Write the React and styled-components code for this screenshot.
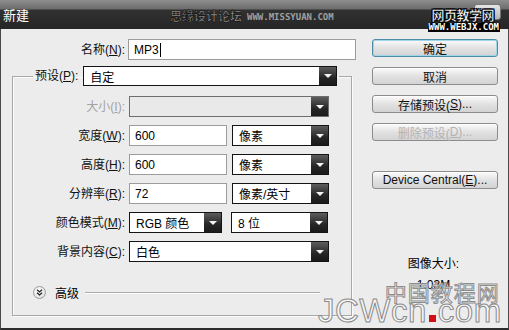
import React from "react";
import styled, { createGlobalStyle } from "styled-components";

const GlobalStyle = createGlobalStyle`
  html, body {
    margin: 0;
    padding: 0;
    background: #ececec;
  }
  body {
    font-family: "Liberation Sans", "Noto Sans CJK SC", sans-serif;
    font-size: 12px;
    color: #000;
  }
`;

const Dialog = styled.div`
  position: relative;
  width: 509px;
  height: 330px;
  overflow: hidden;
  background: #ececec;
  display: flex;
  flex-direction: column;
`;

const TitleBar = styled.div`
  position: relative;
  flex: none;
  height: 29px;
  display: flex;
  align-items: center;
  padding-left: 3px;
  background: linear-gradient(#8e8e8e 0, #6c6c6c 9px, #313131 10px, #262626 100%);
`;

const Title = styled.span`
  color: #fff;
  font-family: "Noto Sans CJK SC", sans-serif;
  font-size: 13px;
  line-height: 1;
`;

const SiteMark = styled.div`
  position: absolute;
  left: 170px;
  top: 9px;
  display: flex;
  align-items: flex-end;
  gap: 5px;
  color: #8f8f8f;
  .cn {
    font-family: "Noto Sans CJK SC", sans-serif;
    font-weight: 700;
    font-size: 12px;
    line-height: 14px;
    -webkit-text-stroke: 0.6px #111;
  }
  .url {
    font-family: "DejaVu Sans Mono", monospace;
    font-weight: 700;
    font-size: 9px;
    line-height: 12px;
    color: #a0a0a0;
  }
`;

const CloseButton = styled.div`
  position: absolute;
  left: 474px;
  top: 4px;
  width: 27px;
  height: 16px;
  border-radius: 3px;
  background: linear-gradient(#e6e6e6, #b4b4b4);
  border: 1px solid #777;
  box-sizing: border-box;
`;

const CornerLogo = styled.div`
  position: absolute;
  right: 9px;
  top: 7px;
  display: flex;
  flex-direction: column;
  align-items: flex-end;
  .cn {
    font-family: "Noto Sans CJK SC", sans-serif;
    font-weight: 700;
    font-size: 13px;
    line-height: 15px;
    color: #fff;
    letter-spacing: -0.5px;
    -webkit-text-stroke: 0.4px #000;
    text-shadow: 1px 1px 0 #000, -1px -1px 0 #000, 1px -1px 0 #000, -1px 1px 0 #000;
    padding-right: 6px;
  }
  .url {
    margin-top: 1px;
    background: #000;
    color: #fff;
    font-family: "DejaVu Sans Mono", monospace;
    font-weight: 700;
    font-size: 9px;
    line-height: 9px;
    padding: 0 1px;
  }
`;

const Body = styled.div`
  flex: 1;
  display: flex;
  border-left: 1px solid #4a4a4a;
  border-right: 1px solid #4a4a4a;
  border-bottom: 2px solid #2c2c2c;
`;

const LeftPane = styled.div`
  width: 360px;
  padding: 10px 0 0 11px;
`;

const NameRow = styled.div`
  display: grid;
  grid-template-columns: 113px 228px;
  column-gap: 3px;
  align-items: center;
  height: 21px;
`;

const Label = styled.span`
  text-align: right;
  white-space: nowrap;
  color: ${(p) => (p.disabled ? "#a3a3a3" : "#111")};
  font-size: 12px;
  line-height: 14px;
`;

const TextInput = styled.div`
  box-sizing: border-box;
  height: 21px;
  width: ${(p) => p.w}px;
  background: #fff;
  border: 1px solid #9c9c9c;
  padding-left: 5px;
  display: flex;
  align-items: center;
  font-size: 12px;
`;

const Caret = styled.span`
  display: inline-block;
  width: 1px;
  height: 14px;
  background: #000;
  margin-left: 1px;
`;

const Group = styled.fieldset`
  margin: 6px 0 0 0;
  width: 340px;
  box-sizing: border-box;
  padding: 0 0 16px 0;
  border: 1px solid #a8a8a8;
  box-shadow: inset 1px 1px 0 #fbfbfb, 1px 1px 0 #fbfbfb;
`;

const Legend = styled.legend`
  margin-left: 20px;
  padding: 0 2px;
`;

const LegendInner = styled.div`
  display: flex;
  align-items: center;
  gap: 5px;
`;

const Rows = styled.div`
  display: grid;
  grid-template-columns: 112px 200px;
  column-gap: 4px;
  row-gap: 8px;
  align-items: center;
  padding-top: 10px;
`;

const Pair = styled.div`
  display: flex;
  gap: ${(p) => p.gap || 5}px;
`;

const SelectBox = styled.div`
  box-sizing: border-box;
  height: ${(p) => p.h || 21}px;
  width: ${(p) => p.w}px;
  display: flex;
  border: 1px solid ${(p) => (p.disabled ? "#6e6e6e" : "#141414")};
  background: ${(p) => (p.disabled ? "#e9e9e9" : "#fff")};
`;

const SelectText = styled.span`
  flex: 1;
  padding-left: 6px;
  display: flex;
  align-items: center;
  font-size: 12px;
  white-space: nowrap;
`;

const SelectArrow = styled.span`
  flex: none;
  width: 17px;
  background: linear-gradient(#5d5d5d, #262626 60%, #1a1a1a);
  display: flex;
  align-items: center;
  justify-content: center;
  &::after {
    content: "";
    border-left: 4px solid transparent;
    border-right: 4px solid transparent;
    border-top: 4px solid #f4f4f4;
  }
`;

const Select = ({ w, h, disabled, children }) => (
  <SelectBox w={w} h={h} disabled={disabled}>
    <SelectText>{children}</SelectText>
    <SelectArrow />
  </SelectBox>
);

const AdvancedRow = styled.div`
  display: flex;
  align-items: center;
  margin: 23px 31px 0 20px;
  height: 14px;
`;

const Toggle = styled.span`
  width: 13px;
  height: 13px;
  border-radius: 50%;
  box-sizing: border-box;
  border: 1px solid #9a9a9a;
  background: radial-gradient(circle at 40% 35%, #ffffff, #d6d6d6);
  display: flex;
  align-items: center;
  justify-content: center;
`;

const AdvancedLabel = styled.span`
  margin-left: 9px;
  font-size: 12px;
`;

const Rule = styled.span`
  flex: 1;
  margin-left: 6px;
  height: 1px;
  background: #ababab;
  box-shadow: 0 1px 0 #fff;
`;

const RightPane = styled.div`
  width: 126px;
  padding-top: 10px;
  display: flex;
  flex-direction: column;
  gap: 10px;
`;

const Button = styled.div`
  box-sizing: border-box;
  height: 18px;
  border-radius: 3px;
  border: 1px solid ${(p) => (p.primary ? "#4f8aa6" : "#8c8c8c")};
  background: linear-gradient(#fbfbfb, #e2e2e2 50%, #d3d3d3);
  box-shadow: ${(p) => (p.primary ? "inset 0 0 0 1px #9fd6ec" : "inset 0 1px 0 #fff")};
  display: flex;
  align-items: center;
  justify-content: center;
  font-size: 12px;
  color: ${(p) => (p.disabled ? "#b3b3b3" : "#111")};
  margin-top: ${(p) => p.push || 0}px;
`;

const SizeInfo = styled.div`
  margin-top: 55px;
  display: flex;
  flex-direction: column;
  align-items: center;
  gap: 7px;
  font-size: 12px;
  padding-right: 3px;
`;

const Watermark = styled.div`
  position: absolute;
  left: 318px;
  top: 279px;
  display: flex;
  flex-direction: column;
  align-items: flex-end;
  pointer-events: none;
  .cn {
    font-family: "Noto Sans CJK SC", sans-serif;
    font-size: 22px;
    line-height: 24px;
    letter-spacing: 1px;
    color: rgba(250, 250, 250, 0.85);
    -webkit-text-stroke: 1px #8e8e8e;
    margin-right: 2px;
  }
  .en {
    display: flex;
    align-items: baseline;
    margin-top: -6px;
    font-family: "Liberation Sans", sans-serif;
    font-size: 33px;
    line-height: 28px;
    color: rgba(250, 250, 250, 0.9);
    -webkit-text-stroke: 1px #8a8a8a;
    letter-spacing: 0.5px;
  }
`;

const RedDot = styled.span`
  display: inline-block;
  width: 7px;
  height: 7px;
  background: #d10f14;
  margin: 0 2px 0 2px;
`;

const ChevronDown = () => (
  <svg width="7" height="7" viewBox="0 0 7 7">
    <path d="M1 0.8 L3.5 3 L6 0.8 M1 3.8 L3.5 6 L6 3.8" fill="none" stroke="#222" strokeWidth="1.3" />
  </svg>
);

export default function App() {
  return (
    <Dialog>
      <GlobalStyle />
      <TitleBar>
        <Title>新建</Title>
        <SiteMark>
          <span className="cn">思缘设计论坛</span>
          <span className="url">WWW.MISSYUAN.COM</span>
        </SiteMark>
        <CloseButton />
        <CornerLogo>
          <span className="cn">网页教学网</span>
          <span className="url">WWW.WEBJX.COM</span>
        </CornerLogo>
      </TitleBar>
      <Body>
        <LeftPane>
          <NameRow>
            <Label>
              名称(<u>N</u>):
            </Label>
            <TextInput w={228}>
              MP3
              <Caret />
            </TextInput>
          </NameRow>
          <Group>
            <Legend>
              <LegendInner>
                <Label>
                  预设(<u>P</u>):
                </Label>
                <Select w={254} h={20}>自定</Select>
              </LegendInner>
            </Legend>
            <Rows>
              <Label disabled>
                大小(<u>I</u>):
              </Label>
              <Select w={200} disabled />
              <Label>
                宽度(<u>W</u>):
              </Label>
              <Pair>
                <TextInput w={98}>600</TextInput>
                <Select w={97}>像素</Select>
              </Pair>
              <Label>
                高度(<u>H</u>):
              </Label>
              <Pair>
                <TextInput w={98}>600</TextInput>
                <Select w={97}>像素</Select>
              </Pair>
              <Label>
                分辨率(<u>R</u>):
              </Label>
              <Pair>
                <TextInput w={98}>72</TextInput>
                <Select w={97}>像素/英寸</Select>
              </Pair>
              <Label>
                颜色模式(<u>M</u>):
              </Label>
              <Pair gap={9}>
                <Select w={93}>RGB 颜色</Select>
                <Select w={97}>8 位</Select>
              </Pair>
              <Label>
                背景内容(<u>C</u>):
              </Label>
              <Select w={200}>白色</Select>
            </Rows>
            <AdvancedRow>
              <Toggle>
                <ChevronDown />
              </Toggle>
              <AdvancedLabel>高级</AdvancedLabel>
              <Rule />
            </AdvancedRow>
          </Group>
        </LeftPane>
        <RightPane>
          <Button primary>确定</Button>
          <Button>取消</Button>
          <Button>
            存储预设(<u>S</u>)...
          </Button>
          <Button disabled>
            删除预设(<u>D</u>)...
          </Button>
          <Button push={20}>
            Device Central(<u>E</u>)...
          </Button>
          <SizeInfo>
            <span>图像大小:</span>
            <span>1.03M</span>
          </SizeInfo>
        </RightPane>
      </Body>
      <Watermark>
        <span className="cn">中国教程网</span>
        <span className="en">
          JCWcn<RedDot />com
        </span>
      </Watermark>
    </Dialog>
  );
}
